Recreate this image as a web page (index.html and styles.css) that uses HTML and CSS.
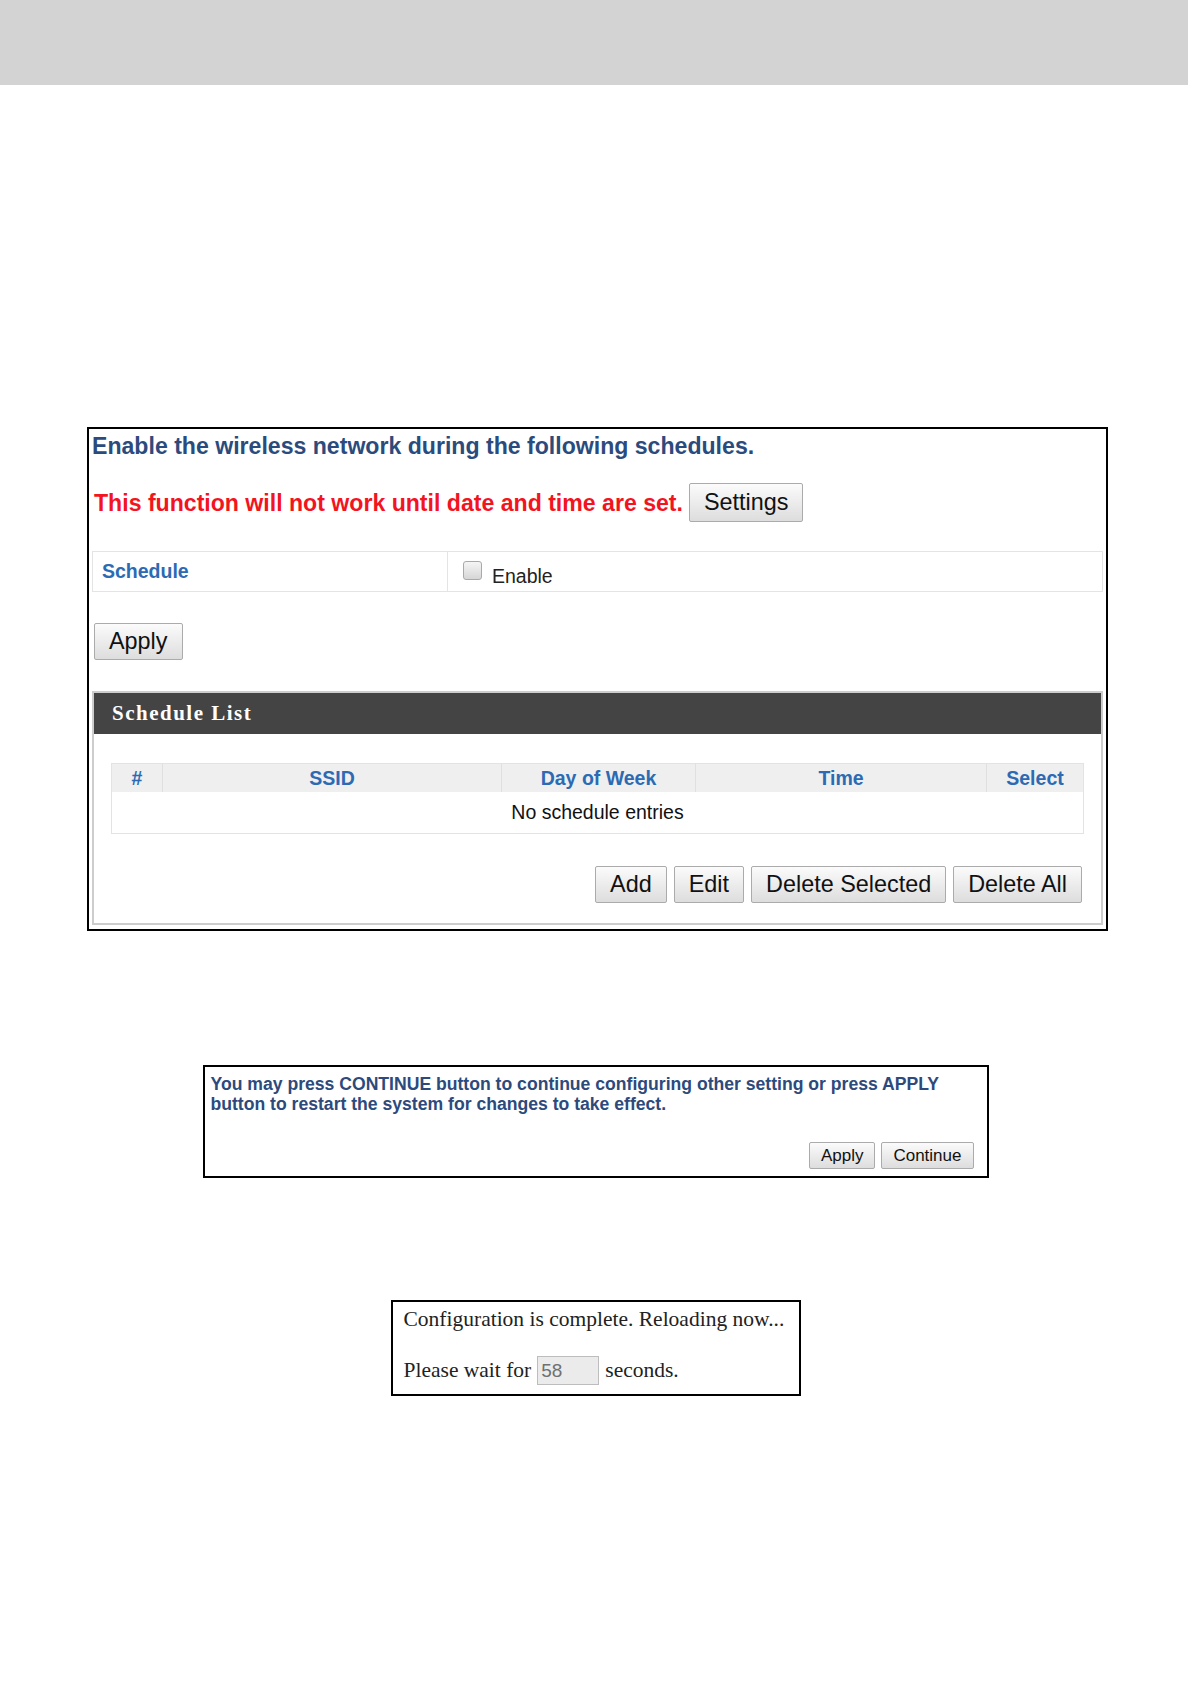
FILE: index.html
```html
<!DOCTYPE html>
<html lang="en">
<head>
<meta charset="utf-8">
<title>Schedule</title>
<link rel="stylesheet" href="styles.css">
</head>
<body>
<div class="topbar"></div>

<div class="panel">
  <h2 class="title">Enable the wireless network during the following schedules.</h2>
  <div class="warn-row">
    <span class="warn">This function will not work until date and time are set.</span>
    <button class="btn btn-tall">Settings</button>
  </div>
  <div class="sched">
    <div class="lbl">Schedule</div>
    <div class="val"><span class="cb"></span><span class="enable">Enable</span></div>
  </div>
  <button class="btn apply">Apply</button>

  <section class="list">
    <div class="list-head">Schedule List</div>
    <div class="list-body">
      <table class="grid">
        <colgroup>
          <col class="c1"><col class="c2"><col class="c3"><col class="c4"><col class="c5">
        </colgroup>
        <thead>
          <tr><th>#</th><th>SSID</th><th>Day of Week</th><th>Time</th><th>Select</th></tr>
        </thead>
        <tbody>
          <tr><td class="empty" colspan="5">No schedule entries</td></tr>
        </tbody>
      </table>
      <div class="actions">
        <button class="btn">Add</button>
        <button class="btn">Edit</button>
        <button class="btn">Delete Selected</button>
        <button class="btn">Delete All</button>
      </div>
    </div>
  </section>
</div>

<div class="notice">
  <p class="notice-text">You may press CONTINUE button to continue configuring other setting or press APPLY button to restart the system for changes to take effect.</p>
  <div class="notice-actions">
    <button class="btn btn-sm">Apply</button>
    <button class="btn btn-sm">Continue</button>
  </div>
</div>

<div class="reload">
  <p class="reload-line">Configuration is complete. Reloading now...</p>
  <div class="reload-wait">
    <span>Please wait for</span>
    <input class="count" type="text" value="58" disabled>
    <span>seconds.</span>
  </div>
</div>
</body>
</html>
```

FILE: styles.css
```css
body {
  margin: 0;
  background: #ffffff;
  font-family: "Liberation Sans", Arial, sans-serif;
  color: #000;
}

.topbar {
  width: 1188px;
  height: 85px;
  background: #d3d3d3;
}

/* main panel */
.panel {
  box-sizing: border-box;
  width: 1021px;
  margin: 342px 0 0 87px;
  border: 2px solid #000;
  padding: 0 3px 4px;
}

.title {
  margin: 4px 0 0 0;
  font-size: 23.1px;
  line-height: 26px;
  font-weight: bold;
  color: #2c4b7d;
}

.warn-row {
  display: flex;
  align-items: center;
  gap: 6px;
  margin-top: 24px;
  padding-left: 2px;
}

.warn {
  font-size: 23.1px;
  line-height: 26px;
  font-weight: bold;
  color: #f2141e;
}

.btn {
  font-family: "Liberation Sans", Arial, sans-serif;
  font-size: 23.4px;
  line-height: 25px;
  padding: 5px 14px;
  border: 1px solid #ababab;
  border-radius: 2px;
  background: linear-gradient(#fbfbfb, #dddddd);
  color: #111;
  margin: 0;
}

.btn-tall {
  padding: 6px 14px;
}

.sched {
  box-sizing: border-box;
  display: flex;
  height: 41px;
  margin-top: 29px;
  border: 1px solid #e4e4e4;
}

.lbl {
  box-sizing: border-box;
  width: 355px;
  padding-left: 9px;
  border-right: 1px solid #e4e4e4;
  display: flex;
  align-items: center;
  font-size: 19.5px;
  font-weight: bold;
  color: #2c6ab4;
}

.val {
  display: flex;
  align-items: center;
  padding-left: 15px;
}

.cb {
  box-sizing: border-box;
  width: 19px;
  height: 19px;
  border: 1px solid #a9a9a9;
  border-radius: 3px;
  background: linear-gradient(#f5f5f5, #d6d6d6);
  margin-top: -2px;
}

.enable {
  font-size: 19.5px;
  color: #222;
  margin-left: 10px;
  padding-top: 9px;
}

.apply {
  display: block;
  margin: 31px 0 0 2px;
}

/* schedule list */
.list {
  margin-top: 31px;
  border: 2px solid #cdcdcd;
}

.list-head {
  height: 41px;
  line-height: 41px;
  padding-left: 18px;
  background: #444444;
  color: #ffffff;
  font-family: "Liberation Serif", "Times New Roman", serif;
  font-weight: bold;
  font-size: 21px;
  letter-spacing: 1.5px;
}

.list-body {
  padding: 29px 18px 20px 17px;
}

.grid {
  width: 100%;
  border-collapse: collapse;
  border: 1px solid #e3e3e3;
  table-layout: fixed;
}

.c1 { width: 51px; }
.c2 { width: 339px; }
.c3 { width: 194px; }
.c4 { width: 291px; }
.c5 { width: 97px; }

.grid th {
  height: 28px;
  padding: 0;
  background: #efefef;
  border-left: 1px solid #e0e0e0;
  font-size: 19.5px;
  font-weight: bold;
  color: #2c6ab4;
  text-align: center;
}

.grid th:first-child {
  border-left: none;
}

.grid td.empty {
  height: 41px;
  padding: 0;
  text-align: center;
  font-size: 19.5px;
  color: #111;
}

.actions {
  display: flex;
  justify-content: flex-end;
  gap: 7px;
  margin-top: 32px;
  padding-right: 1px;
}

/* notice box */
.notice {
  box-sizing: border-box;
  width: 786px;
  margin: 134px auto 0;
  border: 2px solid #000;
  padding: 8px 13px 7px 6px;
}

.notice-text {
  margin: 0;
  font-size: 17.6px;
  line-height: 19.5px;
  font-weight: bold;
  color: #2c4a7c;
}

.notice-actions {
  display: flex;
  justify-content: flex-end;
  gap: 6px;
  margin-top: 28px;
}

.btn-sm {
  font-size: 17px;
  line-height: 19px;
  padding: 3px 11px;
}

/* reload box */
.reload {
  box-sizing: border-box;
  width: 410px;
  margin: 122px auto 0;
  border: 2px solid #000;
  padding: 5px 11px 9px;
  font-family: "Liberation Serif", "Times New Roman", serif;
  font-size: 21.5px;
  color: #222;
}

.reload-line {
  margin: 0;
  line-height: 24px;
}

.reload-wait {
  display: flex;
  align-items: center;
  gap: 6px;
  margin-top: 25px;
}

.count {
  box-sizing: border-box;
  width: 62px;
  height: 29px;
  padding: 0 3px;
  border: 1px solid #bdbdbd;
  background: #ebebeb;
  font-family: "Liberation Sans", Arial, sans-serif;
  font-size: 19px;
  color: #707070;
}
```
